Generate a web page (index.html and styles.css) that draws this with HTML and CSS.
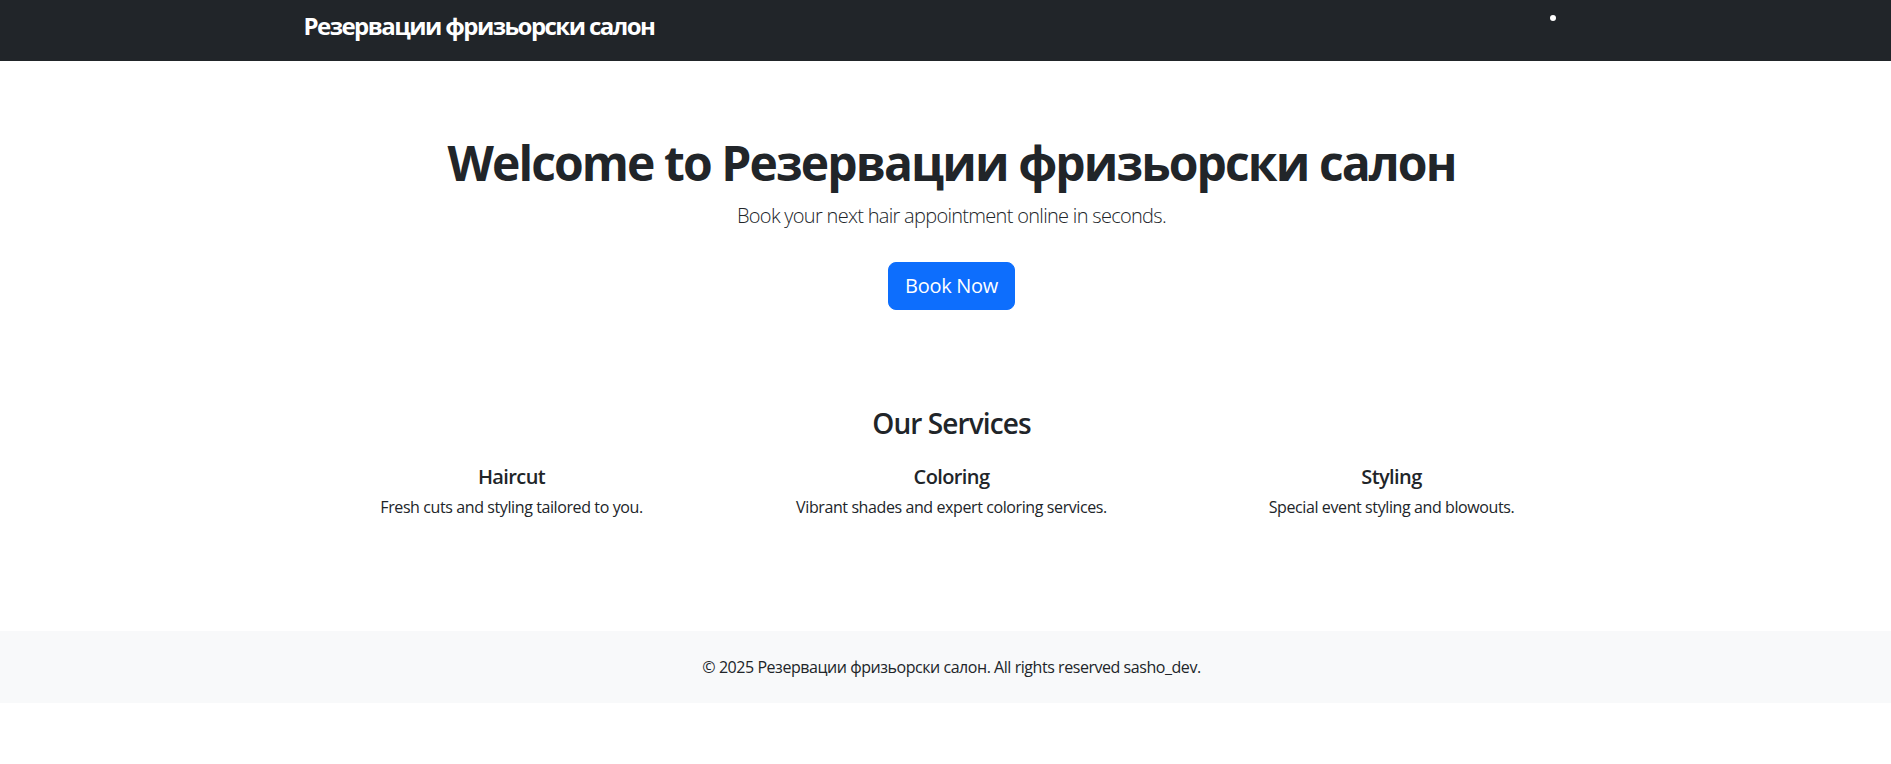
FILE: index.html
```html
<!DOCTYPE html>
<html lang="bg">
<head>
<meta charset="utf-8">
<title>Резервации фризьорски салон</title>
<link rel="stylesheet" href="styles.css">
</head>
<body>
<div class="page">
  <nav class="navbar">
    <div class="container nav-inner">
      <a class="brand" href="#">Резервации фризьорски салон</a>
      <span class="nav-dot"></span>
    </div>
  </nav>

  <main>
    <section class="hero container">
      <h1 class="hero-title">Welcome to Резервации фризьорски салон</h1>
      <p class="lead">Book your next hair appointment online in seconds.</p>
      <a class="btn-primary" href="#">Book Now</a>
    </section>

    <section class="services container">
      <h2 class="services-title">Our Services</h2>
      <div class="services-row">
        <div class="service">
          <h3 class="service-name">Haircut</h3>
          <p class="service-desc">Fresh cuts and styling tailored to you.</p>
        </div>
        <div class="service">
          <h3 class="service-name">Coloring</h3>
          <p class="service-desc">Vibrant shades and expert coloring services.</p>
        </div>
        <div class="service">
          <h3 class="service-name">Styling</h3>
          <p class="service-desc">Special event styling and blowouts.</p>
        </div>
      </div>
    </section>
  </main>

  <footer class="footer">
    <p class="footer-text">© 2025 Резервации фризьорски салон. All rights reserved sasho_dev.</p>
  </footer>
</div>
</body>
</html>
```

FILE: styles.css
```css
* { box-sizing: border-box; }

html, body {
  margin: 0;
  padding: 0;
  overflow-x: hidden;
  background: #fff;
}

body {
  font-family: "Open Sans", "Noto Sans", "Liberation Sans", sans-serif;
  font-size: 16px;
  line-height: 1.5;
  color: #212529;
}

.page {
  width: 1903px;
}

.container {
  width: 1320px;
  margin: 0 auto;
  padding: 0 12px;
}

/* Navbar */
.navbar {
  background: #212529;
  height: 61px;
}

.nav-inner {
  display: flex;
  align-items: flex-start;
  justify-content: space-between;
  height: 100%;
}

.brand {
  display: block;
  color: #fff;
  text-decoration: none;
  font-size: 24px;
  font-weight: 700;
  line-height: 36px;
  margin-top: 8px;
  letter-spacing: -1.55px;
}

.nav-dot {
  width: 6px;
  height: 6px;
  border-radius: 50%;
  background: #fff;
  margin-top: 15px;
  margin-right: 44px;
}

/* Hero */
.hero {
  text-align: center;
  padding-top: 73px;
}

.hero-title {
  margin: 0 0 9px;
  font-size: 48px;
  font-weight: 700;
  line-height: 1.2;
  letter-spacing: -1.9px;
}

.lead {
  margin: 0 0 31px;
  font-size: 20px;
  font-weight: 300;
  line-height: 30px;
  letter-spacing: -0.7px;
}

.btn-primary {
  display: inline-block;
  background: #0d6efd;
  border: 1px solid #0d6efd;
  color: #fff;
  text-decoration: none;
  font-size: 20px;
  line-height: 30px;
  padding: 8px 16px;
  border-radius: 8px;
  letter-spacing: -0.3px;
}

/* Services */
.services {
  text-align: center;
  padding-top: 97px;
}

.services-title {
  margin: 0 0 25px;
  font-size: 28px;
  font-weight: 600;
  line-height: 1.2;
  letter-spacing: -0.9px;
}

.services-row {
  display: grid;
  grid-template-columns: repeat(3, 1fr);
  margin: 0 -12px;
}

.service {
  padding: 0 12px;
}

.service-name {
  margin: 0 0 6px;
  font-size: 20px;
  font-weight: 600;
  line-height: 1.2;
  letter-spacing: -0.6px;
}

.service-desc {
  margin: 0;
  font-size: 16px;
  line-height: 24px;
  letter-spacing: -0.4px;
}

/* Footer */
.footer {
  margin-top: 112px;
  background: #f8f9fa;
  padding: 24px 0;
  text-align: center;
}

.footer-text {
  margin: 0;
  font-size: 16px;
  line-height: 24px;
  letter-spacing: -0.45px;
}
```
